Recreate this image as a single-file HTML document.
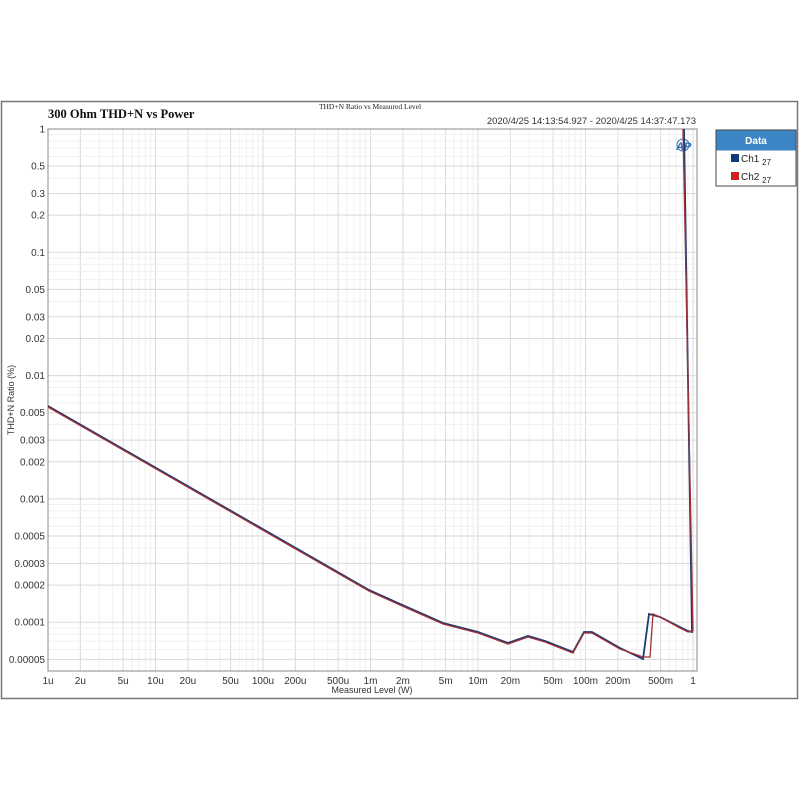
<!DOCTYPE html>
<html><head><meta charset="utf-8"><style>
body{margin:0;background:#fff;width:800px;height:800px;overflow:hidden;font-family:"Liberation Sans",sans-serif}
</style></head><body>
<svg id="s" width="800" height="800" xmlns="http://www.w3.org/2000/svg" style="position:absolute;left:0;top:0">
<rect x="1.5" y="101.5" width="796" height="597" fill="#fff" stroke="#777" stroke-width="1.5"/>
<g id="grid"></g>
<rect x="48" y="129" width="649" height="542" fill="none" stroke="#888" stroke-width="1"/>
<g id="lbl" font-size="10" fill="#333" font-family="Liberation Sans,sans-serif"></g>
<text x="48" y="118" font-family="Liberation Serif,serif" font-weight="bold" font-size="12.5" fill="#111">300 Ohm THD+N vs Power</text>
<text x="370" y="109" font-family="Liberation Serif,serif" font-size="7.5" fill="#222" text-anchor="middle">THD+N Ratio vs Measured Level</text>
<text x="696" y="124" font-size="9.5" fill="#333" text-anchor="end">2020/4/25 14:13:54.927 - 2020/4/25 14:37:47.173</text>
<text x="372" y="693" font-size="9" fill="#333" text-anchor="middle">Measured Level (W)</text>
<text transform="translate(14,400) rotate(-90)" font-size="9" fill="#333" text-anchor="middle">THD+N Ratio (%)</text>
<text x="676" y="150" font-size="11" font-weight="bold" fill="#2a6fb5" font-style="italic">AP</text>
<circle cx="683" cy="145" r="6" fill="none" stroke="#2a6fb5" stroke-width="1"/>
<polyline fill="none" stroke="#1f3a6e" stroke-width="1.8" points="48,406 369,590 400,604 443,623 478,632 508,643 528,636 545,641 573,652 584,632 592,632 620,648 643,659 649,614 660,617 680,627 688,631 692,632 684,129"/>
<polyline fill="none" stroke="#a0303a" stroke-width="1.3" points="48,407 369,591 400,605 443,624 478,633 508,644 528,637 545,642 573,653 584,633 592,633 620,649 643,657 650,657 653,614 660,617 680,628 688,632 693,631 683,129"/>
<rect x="716" y="130" width="80" height="56" fill="#fff" stroke="#444" stroke-width="1"/>
<rect x="716.5" y="130.5" width="79" height="20" fill="#3c86c6"/>
<text x="756" y="144" font-size="10" font-weight="bold" fill="#fff" text-anchor="middle">Data</text>
<rect x="731" y="154" width="8" height="8" fill="#123a7a"/>
<text x="741" y="162" font-size="10" fill="#222">Ch1 <tspan font-size="8" dy="3">27</tspan></text>
<rect x="731" y="172" width="8" height="8" fill="#cc2222"/>
<text x="741" y="180" font-size="10" fill="#222">Ch2 <tspan font-size="8" dy="3">27</tspan></text>
</svg>
<script>
var g=document.getElementById('grid'),l=document.getElementById('lbl'),ns='http://www.w3.org/2000/svg';
function X(v){return 48+107.5*Math.log10(v/1e-6)}
function Y(v){return 129-123.3*Math.log10(v)}
function ln(x1,y1,x2,y2,c){var e=document.createElementNS(ns,'line');e.setAttribute('x1',x1);e.setAttribute('y1',y1);e.setAttribute('x2',x2);e.setAttribute('y2',y2);e.setAttribute('stroke',c);e.setAttribute('stroke-width',1);g.appendChild(e)}
function tx(x,y,s,a){var e=document.createElementNS(ns,'text');e.setAttribute('x',x);e.setAttribute('y',y);e.setAttribute('text-anchor',a);e.textContent=s;l.appendChild(e)}
for(var d=-6;d<=0;d++)for(var m=1;m<10;m++){var v=m*Math.pow(10,d);if(v>1.05)break;var x=X(v);if(x>697)continue;ln(x,129,x,671,m==1||m==2||m==5?'#dadada':'#f0f0f0')}
for(var d=-5;d<=0;d++)for(var m=1;m<10;m++){var v=m*Math.pow(10,d);var y=Y(v);if(y<129||y>671)continue;ln(48,y,697,y,m==1||m==2||m==3||m==5?'#dadada':'#f0f0f0')}
var xs=[[1e-6,'1u'],[2e-6,'2u'],[5e-6,'5u'],[1e-5,'10u'],[2e-5,'20u'],[5e-5,'50u'],[1e-4,'100u'],[2e-4,'200u'],[5e-4,'500u'],[1e-3,'1m'],[2e-3,'2m'],[5e-3,'5m'],[1e-2,'10m'],[2e-2,'20m'],[5e-2,'50m'],[.1,'100m'],[.2,'200m'],[.5,'500m'],[1,'1']];
xs.forEach(function(a){tx(X(a[0]),684,a[1],'middle')});
var ys=[[1,'1'],[.5,'0.5'],[.3,'0.3'],[.2,'0.2'],[.1,'0.1'],[.05,'0.05'],[.03,'0.03'],[.02,'0.02'],[.01,'0.01'],[.005,'0.005'],[.003,'0.003'],[.002,'0.002'],[.001,'0.001'],[5e-4,'0.0005'],[3e-4,'0.0003'],[2e-4,'0.0002'],[1e-4,'0.0001'],[5e-5,'0.00005']];
ys.forEach(function(a){tx(45,Y(a[0])+3.5,a[1],'end')});
</script>
</body></html>
